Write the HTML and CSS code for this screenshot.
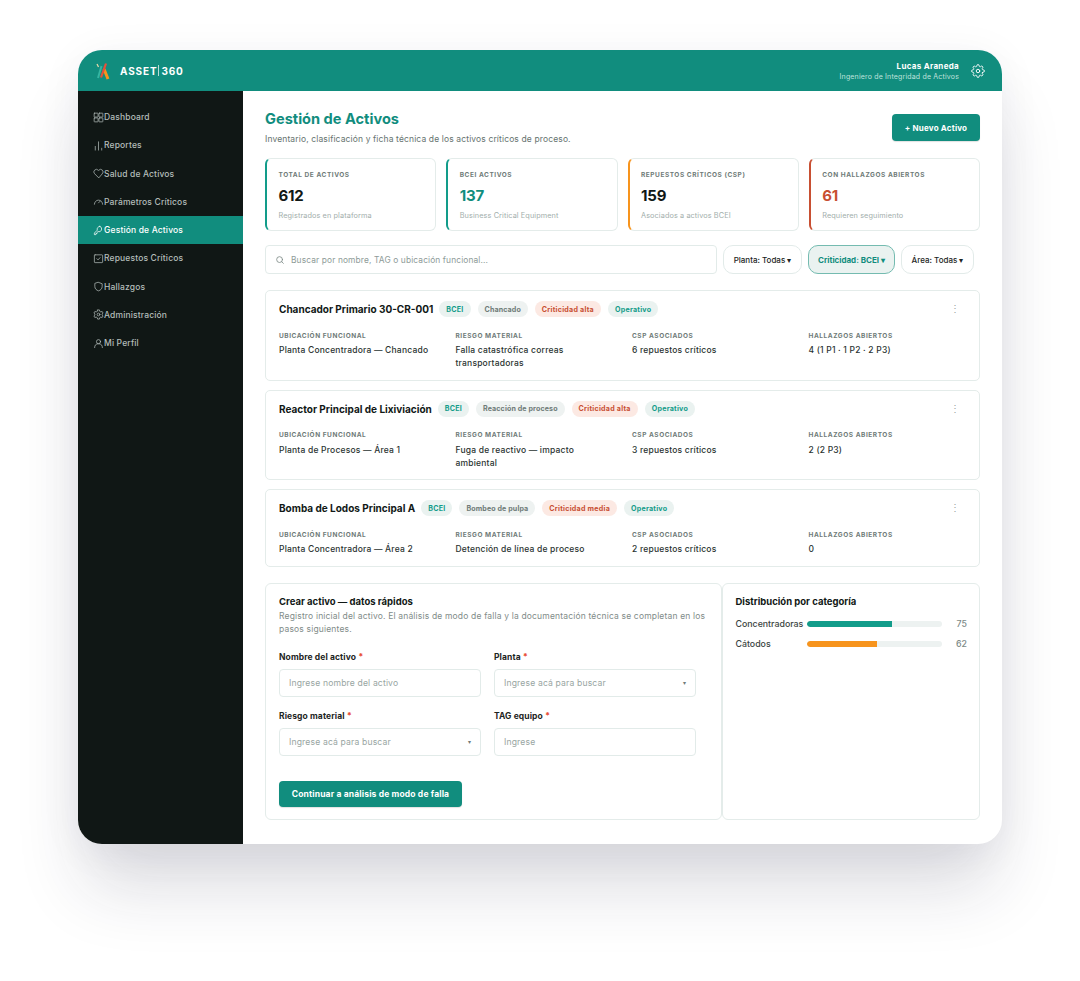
FILE: index.html
```html
<!DOCTYPE html>
<html lang="es">
<head>
<meta charset="utf-8">
<title>Asset 360</title>
<link rel="stylesheet" href="styles.css">
</head>
<body>
<div class="app">
  <header class="topbar">
    <div class="brand">
      <svg class="logo" viewBox="0 0 16 20" fill="none"><path d="M3 3 4.500 6" stroke="#e9d9a8" stroke-width="1.2"/><path d="M7.500 5 4 17" stroke="#35b5a2" stroke-width="2"/><path d="M10 8 14 18" stroke="#f7941d" stroke-width="3"/><path d="M12 2.500 7 16.500" stroke="#e8503a" stroke-width="2.200"/></svg>
      <span class="brand-name">ASSET<i class="brand-bar"></i>360</span>
    </div>
    <div class="user">
      <div class="user-text">
        <div class="user-name">Lucas Araneda</div>
        <div class="user-role">Ingeniero de Integridad de Activos</div>
      </div>
      <svg class="gear" viewBox="0 0 24 24" fill="none" stroke="#fff" stroke-width="1.6" stroke-linecap="round" stroke-linejoin="round"><circle cx="12" cy="12" r="3"/><path d="M19.4 15a1.65 1.65 0 0 0 .33 1.82l.06.06a2 2 0 1 1-2.83 2.83l-.06-.06a1.65 1.65 0 0 0-2.82 1.17V21a2 2 0 0 1-4 0v-.09A1.65 1.65 0 0 0 7.2 19.74l-.06.06a2 2 0 1 1-2.83-2.83l.06-.06a1.65 1.65 0 0 0-1.17-2.82H3a2 2 0 0 1 0-4h.09A1.65 1.65 0 0 0 4.26 7.2l-.06-.06a2 2 0 1 1 2.83-2.83l.06.06a1.65 1.65 0 0 0 1.82.33H9a1.65 1.65 0 0 0 1-1.51V3a2 2 0 0 1 4 0v.09a1.65 1.65 0 0 0 2.82 1.17l.06-.06a2 2 0 1 1 2.83 2.83l-.06.06a1.65 1.65 0 0 0-.33 1.82V9a1.65 1.65 0 0 0 1.51 1H21a2 2 0 0 1 0 4h-.09a1.65 1.65 0 0 0-1.51 1z"/></svg>
    </div>
  </header>
  <div class="body">
    <nav class="sidebar">
      <a class="nav-item"><svg class="nav-icon" viewBox="0 0 24 24"><rect x="2.500" y="2.500" width="8.500" height="8.500" rx="1"/><rect x="13" y="2.500" width="8.500" height="8.500" rx="1"/><rect x="2.500" y="13" width="8.500" height="8.500" rx="1"/><rect x="13" y="13" width="8.500" height="8.500" rx="1"/></svg>Dashboard</a>
      <a class="nav-item"><svg class="nav-icon" viewBox="0 0 24 24"><path d="M5 22v-8M12 22V4M19 22v-4"/></svg>Reportes</a>
      <a class="nav-item"><svg class="nav-icon" viewBox="0 0 24 24"><path d="M12 21 3.500 12.500a5.500 5.500 0 0 1 7.800-7.800l.7.7.7-.7a5.500 5.500 0 0 1 7.800 7.800Z"/></svg>Salud de Activos</a>
      <a class="nav-item"><svg class="nav-icon" viewBox="0 0 24 24"><path d="M3 18a9 9 0 0 1 18 0M12 15l4-4"/></svg>Parámetros Críticos</a>
      <a class="nav-item active"><svg class="nav-icon" viewBox="0 0 24 24"><path d="M15 3a6 6 0 0 0-5.600 8.200L3 17.600V21h3.400v-2.400h2.400v-2.400l2-1.800A6 6 0 1 0 15 3Z"/></svg>Gestión de Activos</a>
      <a class="nav-item"><svg class="nav-icon" viewBox="0 0 24 24"><rect x="3" y="4" width="18" height="17" rx="1.500"/><path d="m8.500 12.500 2.500 2.500 4.500-5"/></svg>Repuestos Críticos</a>
      <a class="nav-item"><svg class="nav-icon" viewBox="0 0 24 24"><path d="M12 3 20 6v6c0 5-3.500 8-8 9.500C7.500 20 4 17 4 12V6Z"/></svg>Hallazgos</a>
      <a class="nav-item"><svg class="nav-icon" viewBox="0 0 24 24"><circle cx="12" cy="12" r="3"/><path d="M10 2h4l.6 3 2.500 1.400 2.900-1 2 3.500-2.300 2a8 8 0 0 1 0 2.200l2.300 2-2 3.500-2.900-1-2.500 1.400-.6 3h-4l-.6-3-2.500-1.400-2.900 1-2-3.500 2.300-2a8 8 0 0 1 0-2.200l-2.300-2 2-3.500 2.900 1L9.400 5Z"/></svg>Administración</a>
      <a class="nav-item"><svg class="nav-icon" viewBox="0 0 24 24"><circle cx="12" cy="8" r="4.500"/><path d="M3.500 21a8.500 8.500 0 0 1 17 0"/></svg>Mi Perfil</a>
    </nav>
    <main class="main">
      <div class="page-head">
        <div>
          <h1 class="page-title">Gestión de Activos</h1>
          <p class="page-sub">Inventario, clasificación y ficha técnica de los activos críticos de proceso.</p>
        </div>
        <button class="btn btn-new">+ Nuevo Activo</button>
      </div>

      <section class="stats">
        <div class="stat stat-teal"><div class="label">TOTAL DE ACTIVOS</div><div class="stat-num">612</div><div class="stat-note">Registrados en plataforma</div></div>
        <div class="stat stat-teal"><div class="label">BCEI ACTIVOS</div><div class="stat-num num-teal">137</div><div class="stat-note">Business Critical Equipment</div></div>
        <div class="stat stat-orange"><div class="label">REPUESTOS CRÍTICOS (CSP)</div><div class="stat-num">159</div><div class="stat-note">Asociados a activos BCEI</div></div>
        <div class="stat stat-red"><div class="label">CON HALLAZGOS ABIERTOS</div><div class="stat-num num-red">61</div><div class="stat-note">Requieren seguimiento</div></div>
      </section>

      <section class="filters">
        <div class="search">
          <svg class="search-icon" viewBox="0 0 24 24" fill="none" stroke="#7d8a87" stroke-width="2" stroke-linecap="round"><circle cx="11" cy="11" r="7"/><path d="m20 20-4-4"/></svg>
          <span>Buscar por nombre, TAG o ubicación funcional...</span>
        </div>
        <button class="pill pill-plant">Planta: Todas ▾</button>
        <button class="pill pill-on">Criticidad: BCEI ▾</button>
        <button class="pill pill-area">Área: Todas ▾</button>
      </section>

      <section class="assets">
        <article class="asset">
          <div class="asset-head">
            <h2 class="asset-name">Chancador Primario 30-CR-001</h2>
            <span class="tag tag-teal">BCEI</span><span class="tag tag-gray">Chancado</span><span class="tag tag-red">Criticidad alta</span><span class="tag tag-teal">Operativo</span>
            <span class="kebab">⋮</span>
          </div>
          <div class="asset-grid">
            <div><div class="label">UBICACIÓN FUNCIONAL</div><div class="val">Planta Concentradora — Chancado</div></div>
            <div><div class="label">RIESGO MATERIAL</div><div class="val">Falla catastrófica correas transportadoras</div></div>
            <div><div class="label">CSP ASOCIADOS</div><div class="val">6 repuestos críticos</div></div>
            <div><div class="label">HALLAZGOS ABIERTOS</div><div class="val">4 (1 P1 · 1 P2 · 2 P3)</div></div>
          </div>
        </article>
        <article class="asset">
          <div class="asset-head">
            <h2 class="asset-name">Reactor Principal de Lixiviación</h2>
            <span class="tag tag-teal">BCEI</span><span class="tag tag-gray">Reacción de proceso</span><span class="tag tag-red">Criticidad alta</span><span class="tag tag-teal">Operativo</span>
            <span class="kebab">⋮</span>
          </div>
          <div class="asset-grid">
            <div><div class="label">UBICACIÓN FUNCIONAL</div><div class="val">Planta de Procesos — Área 1</div></div>
            <div><div class="label">RIESGO MATERIAL</div><div class="val">Fuga de reactivo — impacto ambiental</div></div>
            <div><div class="label">CSP ASOCIADOS</div><div class="val">3 repuestos críticos</div></div>
            <div><div class="label">HALLAZGOS ABIERTOS</div><div class="val">2 (2 P3)</div></div>
          </div>
        </article>
        <article class="asset">
          <div class="asset-head">
            <h2 class="asset-name">Bomba de Lodos Principal A</h2>
            <span class="tag tag-teal">BCEI</span><span class="tag tag-gray">Bombeo de pulpa</span><span class="tag tag-red">Criticidad media</span><span class="tag tag-teal">Operativo</span>
            <span class="kebab">⋮</span>
          </div>
          <div class="asset-grid">
            <div><div class="label">UBICACIÓN FUNCIONAL</div><div class="val">Planta Concentradora — Área 2</div></div>
            <div><div class="label">RIESGO MATERIAL</div><div class="val">Detención de línea de proceso</div></div>
            <div><div class="label">CSP ASOCIADOS</div><div class="val">2 repuestos críticos</div></div>
            <div><div class="label">HALLAZGOS ABIERTOS</div><div class="val">0</div></div>
          </div>
        </article>
      </section>

      <section class="bottom">
        <div class="panel form-panel">
          <h3 class="panel-title">Crear activo — datos rápidos</h3>
          <p class="panel-sub">Registro inicial del activo. El análisis de modo de falla y la documentación técnica se completan en los pasos siguientes.</p>
          <div class="form-grid">
            <div class="field"><div class="field-label">Nombre del activo <b>*</b></div><div class="input">Ingrese nombre del activo</div></div>
            <div class="field"><div class="field-label">Planta <b>*</b></div><div class="input">Ingrese acá para buscar<span class="caret">▾</span></div></div>
            <div class="field"><div class="field-label">Riesgo material <b>*</b></div><div class="input">Ingrese acá para buscar<span class="caret">▾</span></div></div>
            <div class="field"><div class="field-label">TAG equipo <b>*</b></div><div class="input">Ingrese</div></div>
          </div>
          <button class="btn btn-go">Continuar a análisis de modo de falla</button>
        </div>
        <div class="panel dist-panel">
          <h3 class="panel-title">Distribución por categoría</h3>
          <div class="dist-row"><span class="dist-name">Concentradoras</span><span class="track"><span class="fill fill-teal" style="width:63%"></span></span><span class="dist-val">75</span></div>
          <div class="dist-row"><span class="dist-name">Cátodos</span><span class="track"><span class="fill fill-orange" style="width:52%"></span></span><span class="dist-val">62</span></div>
        </div>
      </section>
    </main>
  </div>
</div>
</body>
</html>
```
FILE: styles.css
```css
* { box-sizing: border-box; }
html, body { margin: 0; height: 100%; background: #fff; }
body { padding: 50px 78px 0; font-family: "Inter", "Liberation Sans", sans-serif; color: #111816; overflow: hidden; height: 981px; }
h1, h2, h3, p { margin: 0; }
button { font-family: inherit; border: 0; cursor: pointer; }

.app { width: 924px; height: 794px; border-radius: 24px; overflow: hidden; background: #fff; box-shadow: 0 50px 70px -8px rgba(30,34,60,.16), 0 6px 44px rgba(30,34,60,.06); display: flex; flex-direction: column; }

.topbar { height: 41px; flex: none; background: #118d7e; color: #fff; display: flex; align-items: center; justify-content: space-between; padding: 0 17px 0 16px; }
.brand { display: flex; align-items: center; gap: 10px; }
.logo { width: 16px; height: 20px; }
.brand-name { font-size: 10px; font-weight: 700; letter-spacing: .85px; display: inline-flex; align-items: center; }
.brand-bar { display: inline-block; width: 1px; height: 11px; background: rgba(255,255,255,.7); margin: 0 2px 0 1px; }
.user { display: flex; align-items: center; gap: 12px; }
.user-text { text-align: right; padding-top: 1px; }
.user-name { font-size: 8px; font-weight: 700; line-height: 11px; letter-spacing: .3px; }
.user-role { font-size: 7px; line-height: 10px; color: #bfe2dc; letter-spacing: .17px; }
.gear { width: 14px; height: 14px; }

.body { flex: 1; display: flex; min-height: 0; }
.sidebar { width: 165px; flex: none; background: #101715; padding-top: 12px; }
.nav-item { height: 28.250px; display: flex; align-items: center; gap: 0; padding-left: 15px; font-size: 8.500px; font-weight: 500; color: #b4bdba; letter-spacing: .15px; }
.nav-item.active { background: #118d7e; color: #fff; }
.nav-icon { width: 11px; height: 11px; fill: none; stroke: currentColor; stroke-width: 1.600; stroke-linecap: round; stroke-linejoin: round; flex: none; }

.main { flex: 1; min-width: 0; padding: 18px 22px 0; }
.page-head { display: flex; justify-content: space-between; align-items: flex-start; height: 49px; }
.page-title { font-size: 14.600px; font-weight: 700; line-height: 20px; color: #118d7e; }
.page-sub { font-size: 8.500px; line-height: 12px; margin-top: 4px; color: #66736f; letter-spacing: .13px; }
.btn { background: #118d7e; color: #fff; font-weight: 700; border-radius: 4px; box-shadow: 0 1px 1px rgba(0,0,0,.12); }
.btn-new { width: 88px; height: 27px; margin-top: 5px; font-size: 8px; letter-spacing: .2px; }

.stats { display: grid; grid-template-columns: repeat(4, 1fr); gap: 10px; }
.stat { height: 73px; background: #fff; border: 1px solid #e4ecea; border-left-width: 2px; border-radius: 6px; padding: 11px 11.500px 0; }
.stat-teal { border-left-color: #129c8a; }
.stat-orange { border-left-color: #f7941d; }
.stat-red { border-left-color: #c84f32; }
.label { font-size: 6.500px; line-height: 10px; font-weight: 700; letter-spacing: .55px; color: #6f7b78; white-space: nowrap; }
.stat-num { font-size: 15px; line-height: 20px; font-weight: 700; margin-top: 6px; letter-spacing: -.2px; }
.num-teal { color: #118d7e; }
.num-red { color: #c84f32; }
.stat-note { font-size: 7.300px; line-height: 10px; margin-top: 5px; color: #a2aeab; letter-spacing: .1px; }

.filters { display: flex; align-items: stretch; gap: 6px; height: 29px; margin-top: 14px; }
.search { width: 452px; flex: none; display: flex; align-items: center; gap: 6px; padding-left: 9px; border: 1px solid #e2ebe9; border-radius: 4px; font-size: 8.400px; color: #8e9b98; letter-spacing: .12px; }
.search-icon { width: 10px; height: 10px; }
.pill { height: 29px; background: #fff; border: 1px solid #e2ebe9; border-radius: 10px; font-size: 8px; font-weight: 500; color: #1d2523; padding: 0; }
.pill-plant { width: 79px; }
.pill-on { width: 87px; background: #eaf2f0; border-color: #74bbb0; color: #118d7e; font-weight: 700; }
.pill-area { width: 73px; }

.assets { display: flex; flex-direction: column; gap: 9px; margin-top: 16px; }
.asset { border: 1px solid #e4ecea; border-radius: 5px; padding: 9px 13px 9.500px; }
.asset-head { display: flex; align-items: center; gap: 7px; height: 18px; position: relative; }
.asset-name { font-size: 10px; line-height: 18px; font-weight: 700; color: #111816; white-space: nowrap; margin-right: -1px; }
.tag { height: 16px; display: inline-flex; align-items: center; padding: 0 7px; border-radius: 8px; font-size: 7.100px; font-weight: 700; white-space: nowrap; letter-spacing: .25px; }
.tag-teal { background: #eaf2f0; color: #129c8a; }
.tag-gray { background: #eef2f1; color: #6f7b78; letter-spacing: .12px; }
.tag-red { background: #fce9e3; color: #c84f32; }
.kebab { position: absolute; right: 6px; top: -1px; line-height: 18px; font-size: 10px; color: #9aa6a3; }
.asset-grid { display: grid; grid-template-columns: repeat(4, 176.500px); margin-top: 12.500px; }
.asset-grid > div { padding-right: 24px; }
.val { font-size: 8.500px; line-height: 13px; margin-top: 3.500px; color: #2a3331; font-weight: 500; letter-spacing: .2px; }

.bottom { display: flex; margin-top: 16px; height: 237px; }
.panel { border: 1px solid #e4ecea; border-radius: 6px; padding: 11px 13px; }
.form-panel { width: 457px; flex: none; }
.dist-panel { flex: 1; padding: 11px 12px 11px 12.500px; }
.panel-title { font-size: 9.500px; line-height: 13px; font-weight: 700; color: #111816; }
.panel-sub { font-size: 8.500px; line-height: 13px; margin-top: 2px; color: #7f8c89; letter-spacing: .17px; }
.form-grid { display: grid; grid-template-columns: 202px 202px; column-gap: 13px; row-gap: 13px; margin-top: 15px; }
.field-label { font-size: 8.500px; line-height: 13px; font-weight: 700; color: #1d2523; margin-bottom: 5px; letter-spacing: .1px; }
.field-label b { color: #e8503a; }
.input { height: 28px; border: 1px solid #e2ebe9; border-radius: 4px; display: flex; align-items: center; justify-content: space-between; padding: 0 9px; font-size: 8.600px; color: #98a5a2; letter-spacing: .15px; }
.caret { font-size: 6px; color: #6f7b78; }
.btn-go { display: block; width: 183px; height: 26px; margin-top: 25px; font-size: 8.500px; letter-spacing: .15px; }

.dist-row { display: grid; grid-template-columns: 71px 135px 1fr; align-items: center; height: 20px; font-size: 8.800px; color: #3a4441; font-weight: 500; }
.panel-title + .dist-row { margin-top: 6px; }
.track { display: block; height: 6px; background: #edf2f1; border-radius: 3px; overflow: hidden; }
.fill { display: block; height: 100%; border-radius: 3px 0 0 3px; }
.fill-teal { background: #129c8a; }
.fill-orange { background: #f7941d; }
.dist-val { text-align: right; color: #7d8a87; }
```
